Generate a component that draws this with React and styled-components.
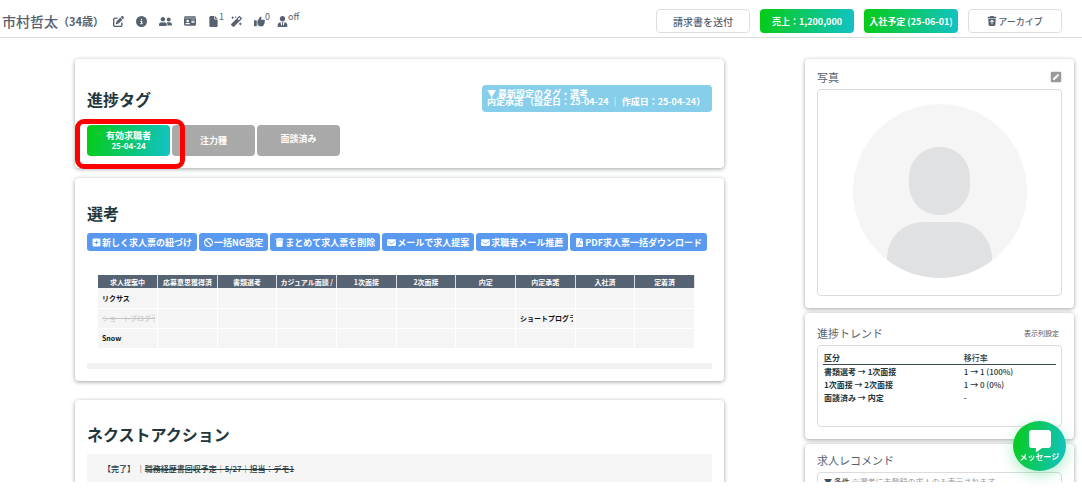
import React from 'react'
import styled, { createGlobalStyle, css } from 'styled-components'
import {
  FaPenToSquare,
  FaCircleInfo,
  FaIdCard,
  FaFile,
  FaThumbsUp,
  FaTrashArrowUp,
  FaSquarePlus,
  FaBan,
  FaTrash,
  FaEnvelope,
  FaMessage
} from 'react-icons/fa6'
import { FaUserFriends, FaPenSquare, FaMagic, FaUserTie, FaFilePdf } from 'react-icons/fa'

const GlobalStyle = createGlobalStyle`
  * {
    box-sizing: border-box;
  }

  body {
    margin: 0;
    background: #fff;
    color: #22363c;
    font-family: "Noto Sans CJK JP", "Noto Sans", sans-serif;
    font-size: 9px;
  }

  button {
    font-family: inherit;
    cursor: pointer;
  }

  h1, h2, h3, p {
    margin: 0;
  }
`

const gradient = 'linear-gradient(100deg, #06cc14, #12c2c8)'
const slate = '#566270'

const Page = styled.div`
  display: flex;
  flex-direction: column;
  height: 100vh;
  padding-bottom: 10px;
  overflow: hidden;
`

const Header = styled.header`
  display: flex;
  flex: none;
  align-items: center;
  justify-content: space-between;
  height: 38px;
  padding: 5px 20px 0 2px;
  border-bottom: 1px solid #dcdcdc;
  color: ${slate};
`

const Person = styled.div`
  display: flex;
  align-items: center;
`

const Name = styled.h1`
  font-size: 14px;
  line-height: 20px;
  font-weight: 500;
`

const Age = styled.span`
  margin-right: 9px;
  font-size: 11px;
  line-height: 20px;
  font-weight: 700;
`

const IconRow = styled.div`
  display: flex;
  align-items: center;
  gap: 12px;
`

const IconButton = styled.button`
  display: flex;
  align-items: center;
  margin-right: ${({ $note }) => ($note ? -5 : 0)}px;
  padding: 0;
  border: 0;
  background: none;
  color: ${slate};
  font-size: 11px;

  sup {
    align-self: flex-start;
    margin-top: -4px;
    font-size: 9px;
    line-height: 10px;
  }
`

const Actions = styled.div`
  display: flex;
  align-items: center;
  gap: 10px;
`

const HeaderButton = styled.button`
  display: flex;
  align-items: center;
  justify-content: center;
  gap: 1px;
  width: 94px;
  height: 24px;
  padding: 0;
  border: 1px solid #dcdfe2;
  border-radius: 4px;
  background: #fff;
  color: ${slate};
  font-size: ${({ $size }) => $size || 9}px;
  font-weight: 500;
  white-space: nowrap;

  ${({ $filled }) => $filled && css`
    border: 0;
    background: ${gradient};
    color: #fff;
    font-weight: 700;
  `}
`

const Body = styled.div`
  display: grid;
  flex: 1;
  grid-template-columns: minmax(0, 1fr) 269px;
  gap: 81px;
  align-items: start;
  min-height: 0;
  padding: 21px 8px 0 75px;
  overflow: hidden;
`

const Main = styled.main`
  display: flex;
  flex-direction: column;
`

const Side = styled.aside`
  display: flex;
  flex-direction: column;
  gap: 5px;
`

const Card = styled.section`
  padding: ${({ $top }) => $top}px 12px 12px;
  margin-bottom: ${({ $gap }) => $gap || 0}px;
  border-radius: 4px;
  background: #fff;
  box-shadow: 0 1px 4px rgba(40, 50, 50, .45);
`

const TitleRow = styled.div`
  display: flex;
  align-items: center;
  justify-content: space-between;
`

const Title = styled.h2`
  font-size: 16px;
  line-height: 24px;
  font-weight: 700;
`

const LatestTag = styled.div`
  width: 230px;
  padding: 5px 5px 6px;
  border-radius: 4px;
  background: #87ceeb;
  color: #fff;
  font-size: 9px;
  line-height: 8px;
  font-weight: 700;
  white-space: nowrap;
`

const Tags = styled.div`
  display: flex;
  gap: 2px;
  margin-top: 13px;
`

const TagWrap = styled.div`
  position: relative;
`

const Tag = styled.button`
  display: block;
  width: 83px;
  height: 31px;
  padding: 0 0 ${({ $lift }) => ($lift ? 4 : 0)}px;
  border: 0;
  border-radius: 4px;
  background: ${({ $active }) => ($active ? gradient : '#a9a9a9')};
  color: #fff;
  font-size: 9px;
  line-height: 10px;
  font-weight: 700;

  small {
    display: block;
    font-size: 8px;
  }
`

const Highlight = styled.div`
  position: absolute;
  z-index: 1;
  inset: -6px -15px -13px -12px;
  border: 5px solid #f00;
  border-radius: 9px;
  pointer-events: none;
`

const Toolbar = styled.div`
  display: flex;
  gap: 2px;
  margin-top: 8px;
`

const ToolButton = styled.button`
  display: flex;
  align-items: center;
  gap: 1px;
  height: 18px;
  padding: 0 5px;
  border: 0;
  border-radius: 3px;
  background: #5999f0;
  color: #fff;
  font-size: 9px;
  font-weight: 700;
  white-space: nowrap;
`

const Scroller = styled.div`
  margin-top: 24px;
  padding: 0 17px 14px 11px;
  border-bottom: 6px solid #f1f1f1;
`

const StageTable = styled.table`
  width: 100%;
  table-layout: fixed;
  border-collapse: collapse;
  font-size: 7px;
  line-height: 12px;
  font-weight: 700;

  th, td {
    overflow: hidden;
    white-space: nowrap;
    border-right: 1px solid #fff;
  }

  th {
    height: 13px;
    padding: 0 1px;
    background: #566373;
    color: #fff;
    border-color: #dde0e3;
  }

  td {
    height: 20px;
    padding: 0 2px 0 4px;
    border-bottom: 1px solid #fff;
    background: #f5f5f5;
    color: #111;
  }

  td div {
    overflow: hidden;
  }

  s {
    color: #c4c4c4;
    font-weight: 400;
  }
`

const ActionItem = styled.p`
  margin-top: 8px;
  padding: 6px 16px;
  background: #f5f5f5;
  font-size: 8px;
  line-height: 18px;
  font-weight: 500;
  white-space: pre;
`

const SideTitle = styled.h3`
  color: ${slate};
  font-size: 11px;
  line-height: 20px;
  font-weight: 400;
`

const TextLink = styled.a`
  padding-right: 3px;
  color: #555;
  font-size: 7px;
  text-decoration: none;
`

const EditPhoto = styled(IconButton)`
  color: #999;
  font-size: 12px;
`

const Panel = styled.div`
  min-height: ${({ $height }) => $height}px;
  margin-top: 2px;
  padding: ${({ $pad }) => $pad || '5px'};
  border: 1px solid #dcdcdc;
  border-radius: 4px;
`

const Avatar = styled.svg`
  display: block;
  width: 174px;
  height: 174px;
  margin: 9px auto;
`

const TrendTable = styled.table`
  width: 100%;
  border-collapse: collapse;
  font-size: 8px;
  line-height: 13px;

  th, td {
    padding: 0 1px;
    text-align: left;
    font-weight: 500;
  }

  th:first-child {
    width: 60%;
    font-weight: 700;
  }

  thead th {
    border-bottom: 1px solid #3e4c52;
  }
`

const Condition = styled.p`
  color: #999;
  font-size: 8px;
  line-height: 12px;
  white-space: nowrap;

  strong {
    color: #3f4d57;
    font-weight: 500;
  }
`

const ChatButton = styled.button`
  position: fixed;
  right: 16px;
  bottom: 21px;
  display: flex;
  flex-direction: column;
  align-items: center;
  justify-content: center;
  width: 53px;
  height: 50px;
  padding: 0;
  border: 0;
  border-radius: 50%;
  background: ${gradient};
  box-shadow: 0 4px 14px rgba(18, 200, 100, .35);
  color: #fff;
  font-size: 8px;
  line-height: 10px;
  font-weight: 700;
  white-space: nowrap;

  svg {
    font-size: 22px;
  }
`

const headerIcons = [
  { label: '編集', icon: FaPenToSquare },
  { label: '情報', icon: FaCircleInfo },
  { label: '担当者', icon: FaUserFriends, size: 13 },
  { label: '名刺', icon: FaIdCard, size: 12 },
  { label: '書類', icon: FaFile, note: '1' },
  { label: '自動入力', icon: FaMagic },
  { label: 'いいね', icon: FaThumbsUp, note: '0' },
  { label: '求職者', icon: FaUserTie, note: 'off' }
]

const tools = [
  { label: '新しく求人票の紐づけ', icon: FaSquarePlus },
  { label: '一括NG設定', icon: FaBan },
  { label: 'まとめて求人票を削除', icon: FaTrash },
  { label: 'メールで求人提案', icon: FaEnvelope },
  { label: '求職者メール推薦', icon: FaEnvelope },
  { label: 'PDF求人票一括ダウンロード', icon: FaFilePdf }
]

const stages = ['求人提案中', '応募意思獲得済', '書類選考', 'カジュアル面談 /', '1次面接', '2次面接', '内定', '内定承諾', '入社済', '定着済']

const jobs = [
  { 0: 'リクサス' },
  { 0: <s>ショートプログラ</s>, 7: 'ショートプログラ' },
  { 0: 'Snow' }
]

const trends = [
  ['書類選考 → 1次面接', '1 → 1 (100%)'],
  ['1次面接 → 2次面接', '1 → 0 (0%)'],
  ['面談済み → 内定', '-']
]

const App = () => (
  <Page>
    <GlobalStyle />
    <Header>
      <Person>
        <Name>市村哲太</Name>
        <Age>（34歳）</Age>
        <IconRow>
          {headerIcons.map(({ label, icon: Icon, size, note }) => (
            <IconButton key={label} aria-label={label} $note={note}>
              <Icon size={size || 11} />
              {note && <sup>{note}</sup>}
            </IconButton>
          ))}
        </IconRow>
      </Person>
      <Actions>
        <HeaderButton $size={10}>請求書を送付</HeaderButton>
        <HeaderButton $filled>売上：1,200,000</HeaderButton>
        <HeaderButton $filled>入社予定 (25-06-01)</HeaderButton>
        <HeaderButton><FaTrashArrowUp size={10} />アーカイブ</HeaderButton>
      </Actions>
    </Header>

    <Body>
      <Main>
        <Card $top={26} $gap={10}>
          <TitleRow>
            <Title>進捗タグ</Title>
            <LatestTag>
              ▼ 最新設定のタグ・選考<br />
              内定承諾 （設定日：25-04-24 ｜ 作成日：25-04-24）
            </LatestTag>
          </TitleRow>
          <Tags>
            <TagWrap>
              <Tag $active>有効求職者<small>25-04-24</small></Tag>
              <Highlight />
            </TagWrap>
            <Tag>注力種</Tag>
            <Tag $lift>面談済み</Tag>
          </Tags>
        </Card>

        <Card $top={23} $gap={19}>
          <Title>選考</Title>
          <Toolbar>
            {tools.map(({ label, icon: Icon }) => (
              <ToolButton key={label}><Icon />{label}</ToolButton>
            ))}
          </Toolbar>
          <Scroller>
            <StageTable>
              <thead>
                <tr>{stages.map(stage => <th key={stage} scope="col">{stage}</th>)}</tr>
              </thead>
              <tbody>
                {jobs.map((job, i) => (
                  <tr key={i}>
                    {stages.map((stage, col) => <td key={stage}><div>{job[col]}</div></td>)}
                  </tr>
                ))}
              </tbody>
            </StageTable>
          </Scroller>
        </Card>

        <Card $top={22}>
          <Title>ネクストアクション</Title>
          <ActionItem>【完了】 ｜<s>職務経歴書回収予定｜5/27｜担当：デモ1</s></ActionItem>
        </Card>
      </Main>

      <Side>
        <Card $top={8}>
          <TitleRow>
            <SideTitle>写真</SideTitle>
            <EditPhoto aria-label="写真を編集"><FaPenSquare /></EditPhoto>
          </TitleRow>
          <Panel $height={207}>
            <Avatar viewBox="0 0 174 174">
              <clipPath id="avatar-clip"><circle cx="87" cy="87" r="87" /></clipPath>
              <g clipPath="url(#avatar-clip)">
                <rect width="174" height="174" fill="#f5f5f5" />
                <rect x="56" y="43" width="61" height="68" rx="30" fill="#e0e1e3" />
                <rect x="34" y="118" width="105" height="90" rx="36" fill="#e0e1e3" />
              </g>
            </Avatar>
          </Panel>
        </Card>

        <Card $top={10}>
          <TitleRow>
            <SideTitle>進捗トレンド</SideTitle>
            <TextLink href="#columns">表示列設定</TextLink>
          </TitleRow>
          <Panel $height={82}>
            <TrendTable>
              <thead>
                <tr><th scope="col">区分</th><th scope="col">移行率</th></tr>
              </thead>
              <tbody>
                {trends.map(([name, rate]) => (
                  <tr key={name}><th scope="row">{name}</th><td>{rate}</td></tr>
                ))}
              </tbody>
            </TrendTable>
          </Panel>
        </Card>

        <Card $top={6}>
          <TitleRow>
            <SideTitle>求人レコメンド</SideTitle>
          </TitleRow>
          <Panel $height={80} $pad="3px 6px">
            <Condition><strong>▼ 条件</strong> ※選考に未登録の求人のみ表示されます</Condition>
          </Panel>
        </Card>
      </Side>
    </Body>

    <ChatButton><FaMessage />メッセージ</ChatButton>
  </Page>
)

export default App
